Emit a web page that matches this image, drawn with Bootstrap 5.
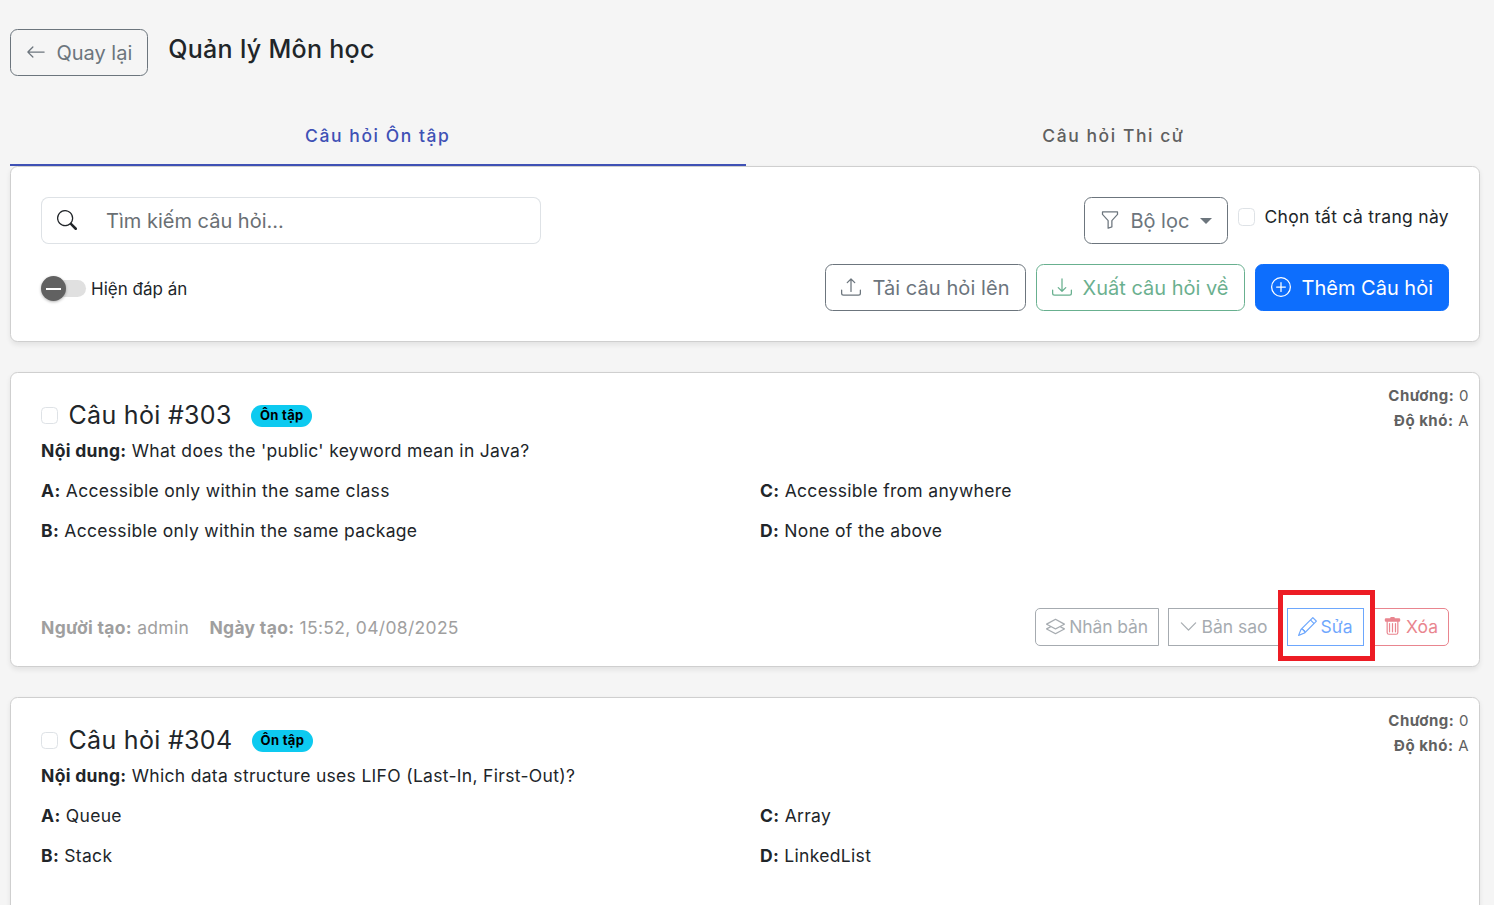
<!DOCTYPE html>
<html lang="vi">
<head>
<meta charset="utf-8">
<meta name="viewport" content="width=device-width, initial-scale=1">
<title>Quản lý Môn học</title>
<link href="https://cdn.jsdelivr.net/npm/bootstrap@5.3.0/dist/css/bootstrap.min.css" rel="stylesheet">
<style>
  html { font-size: 20px; }
  body { font-family: Inter, sans-serif; background: #f5f5f5; }
  .page { padding: 29px 14px 0 10px; height: 905px; overflow: hidden; }
  .bi { width: 1em; height: 1em; fill: currentColor; flex: none; }
  .btn { --bs-btn-border-radius: 7.5px; }
  .btn-icon { display: inline-flex; align-items: center; gap: 11px; }
  .btn-icon .bi { margin-bottom: 2px; }
  .btn-back { gap: 10.4px; }
  .btn-upload { letter-spacing: .07px; }
  .btn-filter { gap: 10.6px; }
  .btn-filter::after { margin-left: 0; }
  .page-title { font-size: 25px; font-weight: 500; letter-spacing: .0125em; line-height: 40px; margin-left: 20px; }
  .tab-row { margin: 30px -1.2px 0 0; }
  .tab-item { height: 60px; padding-top: 3px; font-size: 17.5px; font-weight: 500; letter-spacing: .0892857em; color: #5f5f5f; background: none; border: 0; border-bottom: 2px solid transparent; border-radius: 0; }
  .tab-item.active { color: #3f51b5; border-bottom-color: #3f51b5; }
  .panel { border: 1px solid #cfcfcf; border-radius: 7.5px; background: #fff; box-shadow: 0 2.5px 5px rgba(0,0,0,.075); }
  .toolbar { padding: 30px; height: 176px; }
  .toolbar-actions { margin-top: 20px; }
  .search-box { width: 500px; height: 47px; }
  .search-box .input-group-text, .search-box .form-control { background: #fff; border-color: #dee2e6; }
  .search-box .bi { margin-bottom: 2px; }
  .search-box .form-control { padding-left: 15px; }
  .search-box .form-control::placeholder { color: #6a6f73; opacity: 1; }
  .body-text { font-size: 17.5px; line-height: 25px; letter-spacing: .0178571em; }
  .form-check-input { border-color: #dee2e6; margin: 0; flex: none; }
  .toolbar .form-check-input { width: 17.5px; height: 17.5px; border-radius: 4.4px; margin: 1px 9px 0 0; }
  .question .form-check-input { width: 17px; height: 17px; border-radius: 4.4px; }
  .select-all { height: 39px; margin-left: 10px; }
  .switch-line { padding-top: 2px; }
  .switch-track { width: 38px; height: 17px; border-radius: 9px; background: #e0e0e0; margin-left: 7px; }
  .switch-thumb { width: 25px; height: 25px; border-radius: 50%; background: #616161; margin-left: -7px; margin-top: -4px; box-shadow: 0 1px 3px rgba(0,0,0,.3); }
  .switch-thumb span { width: 15px; height: 2px; background: #fff; }
  .switch-label { font-size: 17px; margin-left: 5px; padding-top: 2px; }
  .question { height: 295px; margin-top: 30px; padding: 30px 30px 20px; }
  .question-title { font-size: 25px; line-height: 25px; letter-spacing: .0125em; font-weight: 400; margin: 0 0 0 10.5px; }
  .badge-tag { font-size: 13px; line-height: 1; padding: 4.5px 8.5px 4.5px 9px; margin-left: 19.2px; font-weight: 700; color: #000; background: #0dcaf0; border-radius: 50rem; }
  .meta { position: absolute; top: 10px; right: 10px; font-size: 15px; line-height: 25px; letter-spacing: .0333em; color: #616161; text-align: right; }
  .content-line { margin-top: 10px; }
  .answers { margin-top: 15px; row-gap: 15px; }
  .footer-line > .author, .footer-line .btn { opacity: .6; }
  .author { color: #616161; padding-top: 2px; }
  .author span { margin-right: 20.2px; }
  .btn-group { gap: 10px; }
  .btn-group .btn { gap: 4px; padding-left: 10px; padding-right: 10px; }
  .btn-sm { --bs-btn-font-size: 17.5px; --bs-btn-border-radius: 5px; }
  .btn-group .bi { font-size: 19px; margin-bottom: 1px; }
  .btn-copy { letter-spacing: -.1px; }
  .btn-group .btn-tight { gap: 3.4px; padding-right: 10.6px; }
  .highlight { position: absolute; left: -10px; top: -18px; width: 97px; height: 71px; border: 5px solid #ed1c24; background: #fff; }
  .edit-wrap { z-index: 2; margin-right: -1px; }
  .edit-wrap .btn { border-radius: 0; background: #fff; }
</style>
<script src="https://cdn.jsdelivr.net/npm/bootstrap@5.3.0/dist/js/bootstrap.bundle.min.js"></script>
</head>
<body>
<div class="page">
  <header class="d-flex align-items-start">
    <button class="btn btn-outline-secondary btn-icon btn-back"><svg class="bi" viewBox="0 0 16 16"><path fill-rule="evenodd" d="M15 8a.5.5 0 0 0-.5-.5H2.707l3.147-3.146a.5.5 0 1 0-.708-.708l-4 4a.5.5 0 0 0 0 .708l4 4a.5.5 0 0 0 .708-.708L2.707 8.5H14.5A.5.5 0 0 0 15 8z"/></svg>Quay lại</button>
    <h1 class="page-title mb-0">Quản lý Môn học</h1>
  </header>
  <nav class="tab-row d-flex">
    <button class="tab-item active flex-fill w-50">Câu hỏi Ôn tập</button>
    <button class="tab-item flex-fill w-50">Câu hỏi Thi cử</button>
  </nav>

  <section class="panel toolbar">
    <div class="d-flex justify-content-between">
      <div class="input-group search-box">
        <span class="input-group-text border-end-0"><svg class="bi" viewBox="0 0 16 16"><path d="M11.742 10.344a6.5 6.5 0 1 0-1.397 1.398h-.001c.03.04.062.078.098.115l3.85 3.85a1 1 0 0 0 1.415-1.414l-3.85-3.85a1.007 1.007 0 0 0-.115-.1zM12 6.5a5.5 5.5 0 1 1-11 0 5.5 5.5 0 0 1 11 0z"/></svg></span>
        <input class="form-control border-start-0" placeholder="Tìm kiếm câu hỏi...">
      </div>
      <div class="d-flex">
        <button class="btn btn-outline-secondary btn-icon btn-filter dropdown-toggle"><svg class="bi" viewBox="0 0 16 16"><path d="M1.5 1.5A.5.5 0 0 1 2 1h12a.5.5 0 0 1 .5.5v2a.5.5 0 0 1-.128.334L10 8.692V13.5a.5.5 0 0 1-.342.474l-3 1A.5.5 0 0 1 6 14.5V8.692L1.628 3.834A.5.5 0 0 1 1.5 3.5v-2zm1 .5v1.308l4.372 4.858A.5.5 0 0 1 7 8.5v5.306l2-.666V8.5a.5.5 0 0 1 .128-.334L13.5 3.308V2h-11z"/></svg>Bộ lọc</button>
        <label class="d-flex align-items-center body-text select-all"><input type="checkbox" class="form-check-input">Chọn tất cả trang này</label>
      </div>
    </div>
    <div class="toolbar-actions d-flex justify-content-between align-items-center">
      <div class="switch-line d-flex align-items-center">
        <div class="switch-track"><div class="switch-thumb d-flex align-items-center justify-content-center"><span></span></div></div>
        <span class="switch-label">Hiện đáp án</span>
      </div>
      <div class="d-flex" style="gap:10px">
        <button class="btn btn-outline-secondary btn-icon btn-upload"><svg class="bi" viewBox="0 0 16 16"><path d="M.5 9.9a.5.5 0 0 1 .5.5v2.5a1 1 0 0 0 1 1h12a1 1 0 0 0 1-1v-2.5a.5.5 0 0 1 1 0v2.5a2 2 0 0 1-2 2H2a2 2 0 0 1-2-2v-2.5a.5.5 0 0 1 .5-.5z"/><path d="M7.646 1.146a.5.5 0 0 1 .708 0l3 3a.5.5 0 0 1-.708.708L8.5 2.707V11.5a.5.5 0 0 1-1 0V2.707L5.354 4.854a.5.5 0 1 1-.708-.708l3-3z"/></svg>Tải câu hỏi lên</button>
        <button class="btn btn-outline-success btn-icon" disabled><svg class="bi" viewBox="0 0 16 16"><path d="M.5 9.9a.5.5 0 0 1 .5.5v2.5a1 1 0 0 0 1 1h12a1 1 0 0 0 1-1v-2.5a.5.5 0 0 1 1 0v2.5a2 2 0 0 1-2 2H2a2 2 0 0 1-2-2v-2.5a.5.5 0 0 1 .5-.5z"/><path d="M7.646 11.854a.5.5 0 0 0 .708 0l3-3a.5.5 0 0 0-.708-.708L8.5 10.293V1.5a.5.5 0 0 0-1 0v8.793L5.354 8.146a.5.5 0 1 0-.708.708l3 3z"/></svg>Xuất câu hỏi về</button>
        <button class="btn btn-primary btn-icon"><svg class="bi" viewBox="0 0 16 16"><path d="M8 15A7 7 0 1 1 8 1a7 7 0 0 1 0 14zm0 1A8 8 0 1 0 8 0a8 8 0 0 0 0 16z"/><path d="M8 4a.5.5 0 0 1 .5.5v3h3a.5.5 0 0 1 0 1h-3v3a.5.5 0 0 1-1 0v-3h-3a.5.5 0 0 1 0-1h3v-3A.5.5 0 0 1 8 4z"/></svg>Thêm Câu hỏi</button>
      </div>
    </div>
  </section>

  <article class="panel question position-relative d-flex flex-column body-text">
    <div class="meta"><div><b>Chương:</b> 0</div><div><b>Độ khó:</b> A</div></div>
    <div class="d-flex align-items-center"><input type="checkbox" class="form-check-input"><h2 class="question-title">Câu hỏi #303</h2><span class="badge-tag">Ôn tập</span></div>
    <div class="content-line"><b>Nội dung:</b> What does the 'public' keyword mean in Java?</div>
    <div class="row answers">
      <div class="col-6"><b>A:</b> Accessible only within the same class</div><div class="col-6"><b>C:</b> Accessible from anywhere</div>
      <div class="col-6"><b>B:</b> Accessible only within the same package</div><div class="col-6"><b>D:</b> None of the above</div>
    </div>
    <div class="footer-line mt-auto d-flex justify-content-between align-items-center">
      <div class="author"><span><b>Người tạo:</b> admin</span><span><b>Ngày tạo:</b> 15:52, 04/08/2025</span></div>
      <div class="btn-group">
        <button class="btn btn-sm btn-outline-secondary btn-icon btn-copy"><svg class="bi" viewBox="0 0 16 16"><path d="M8.235 1.559a.5.5 0 0 0-.47 0l-7.5 4a.5.5 0 0 0 0 .882L3.188 8 .264 9.559a.5.5 0 0 0 0 .882l7.5 4a.5.5 0 0 0 .47 0l7.5-4a.5.5 0 0 0 0-.882L12.813 8l2.922-1.559a.5.5 0 0 0 0-.882l-7.5-4zm3.515 7.008L14.438 10 8 13.433 1.562 10 4.25 8.567l3.515 1.874a.5.5 0 0 0 .47 0l3.515-1.874zM8 9.433 1.562 6 8 2.567 14.438 6 8 9.433z"/></svg>Nhân bản</button>
        <button class="btn btn-sm btn-outline-secondary btn-icon btn-tight"><svg class="bi" viewBox="0 0 16 16"><path fill-rule="evenodd" d="M1.646 4.646a.5.5 0 0 1 .708 0L8 10.293l5.646-5.647a.5.5 0 0 1 .708.708l-6 6a.5.5 0 0 1-.708 0l-6-6a.5.5 0 0 1 0-.708z"/></svg>Bản sao</button>
        <div class="btn-group edit-wrap"><span class="highlight"></span><button class="btn btn-sm btn-outline-primary btn-icon btn-tight"><svg class="bi" viewBox="0 0 16 16"><path d="M12.146.146a.5.5 0 0 1 .708 0l3 3a.5.5 0 0 1 0 .708l-10 10a.5.5 0 0 1-.168.11l-5 2a.5.5 0 0 1-.65-.65l2-5a.5.5 0 0 1 .11-.168l10-10zM11.207 2.5 13.5 4.793 14.793 3.5 12.5 1.207 11.207 2.5zm1.586 3L10.5 3.207 4 9.707V10h.5a.5.5 0 0 1 .5.5v.5h.5a.5.5 0 0 1 .5.5v.5h.293l6.5-6.5zm-9.761 5.175-.106.106-1.528 3.821 3.821-1.528.106-.106A.5.5 0 0 1 5 12.5V12h-.5a.5.5 0 0 1-.5-.5V11h-.5a.5.5 0 0 1-.468-.325z"/></svg>Sửa</button></div>
        <button class="btn btn-sm btn-outline-danger btn-icon"><svg class="bi" viewBox="0 0 16 16"><path d="M2.5 1a1 1 0 0 0-1 1v1a1 1 0 0 0 1 1H3v9a2 2 0 0 0 2 2h6a2 2 0 0 0 2-2V4h.5a1 1 0 0 0 1-1V2a1 1 0 0 0-1-1H10a1 1 0 0 0-1-1H7a1 1 0 0 0-1 1H2.5zm1.5 3h8v9a1 1 0 0 1-1 1H5a1 1 0 0 1-1-1V4zm1.5 1a.5.5 0 0 1 .5.5v7a.5.5 0 0 1-1 0v-7a.5.5 0 0 1 .5-.5zM8 5a.5.5 0 0 1 .5.5v7a.5.5 0 0 1-1 0v-7A.5.5 0 0 1 8 5zm2.5 0a.5.5 0 0 1 .5.5v7a.5.5 0 0 1-1 0v-7a.5.5 0 0 1 .5-.5z"/></svg>Xóa</button>
      </div>
    </div>
  </article>

  <article class="panel question position-relative d-flex flex-column body-text">
    <div class="meta"><div><b>Chương:</b> 0</div><div><b>Độ khó:</b> A</div></div>
    <div class="d-flex align-items-center"><input type="checkbox" class="form-check-input"><h2 class="question-title">Câu hỏi #304</h2><span class="badge-tag">Ôn tập</span></div>
    <div class="content-line"><b>Nội dung:</b> Which data structure uses LIFO (Last-In, First-Out)?</div>
    <div class="row answers">
      <div class="col-6"><b>A:</b> Queue</div><div class="col-6"><b>C:</b> Array</div>
      <div class="col-6"><b>B:</b> Stack</div><div class="col-6"><b>D:</b> LinkedList</div>
    </div>
  </article>
</div>
</body>
</html>
